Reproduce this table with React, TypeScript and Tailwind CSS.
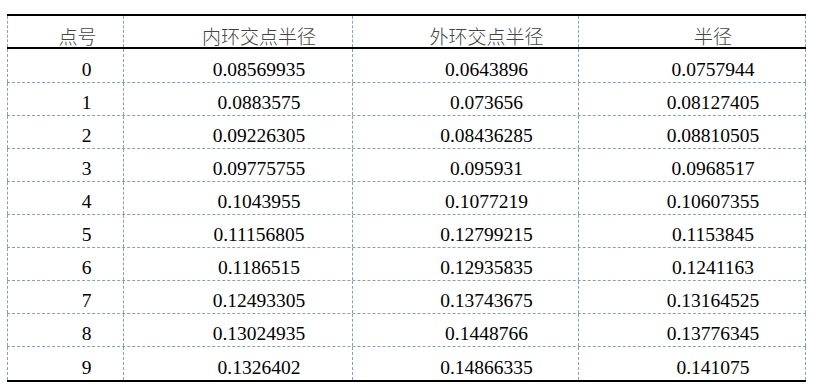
import React from "react"

const rows: [string, string, string, string][] = [
  ["0", "0.08569935", "0.0643896", "0.0757944"],
  ["1", "0.0883575", "0.073656", "0.08127405"],
  ["2", "0.09226305", "0.08436285", "0.08810505"],
  ["3", "0.09775755", "0.095931", "0.0968517"],
  ["4", "0.1043955", "0.1077219", "0.10607355"],
  ["5", "0.11156805", "0.12799215", "0.1153845"],
  ["6", "0.1186515", "0.12935835", "0.1241163"],
  ["7", "0.12493305", "0.13743675", "0.13164525"],
  ["8", "0.13024935", "0.1448766", "0.13776345"],
  ["9", "0.1326402", "0.14866335", "0.141075"],
]

const widths = ["w-[116px]", "w-[229px]", "w-[226px]", "w-[228px]"]

const headers = ["点号", "内环交点半径", "外环交点半径", "半径"]

export default function App() {
  return (
    <div className="w-[819px] h-[392px] bg-white pt-[14px] pl-[7px]">
      <div className="w-[799px]">
        <div className="flex h-[35px] border-t-2 border-b-2 border-black">
          {headers.map((h, i) => (
            <div
              key={h}
              className={`${widths[i]} flex items-end justify-center pb-[2px] border-l border-dashed border-[#8d9fb8] ${
                i === 3 ? "border-r" : ""
              } ${i === 0 ? "pl-[24px]" : "pl-[42px]"}`}
            >
              <span className="text-[19px] leading-none font-light text-[#454545] font-['Noto_Sans_CJK_SC',sans-serif]">
                {h}
              </span>
            </div>
          ))}
        </div>
        {rows.map((r, ri) => (
          <div
            key={r[0]}
            className={`flex ${
              ri === rows.length - 1
                ? "h-[35px] border-b-2 border-black"
                : `${ri === 0 ? "h-[34px]" : "h-[33px]"} border-b border-dashed border-[#8d9fb8]`
            }`}
          >
            {r.map((v, i) => (
              <div
                key={i}
                className={`${widths[i]} flex items-end justify-center pb-[3px] pl-[42px] border-l border-dashed border-[#8d9fb8] ${
                  i === 3 ? "border-r" : ""
                }`}
              >
                <span className="text-[19.5px] leading-none text-black font-['Liberation_Serif','Times_New_Roman',serif]">
                  {v}
                </span>
              </div>
            ))}
          </div>
        ))}
      </div>
    </div>
  )
}
